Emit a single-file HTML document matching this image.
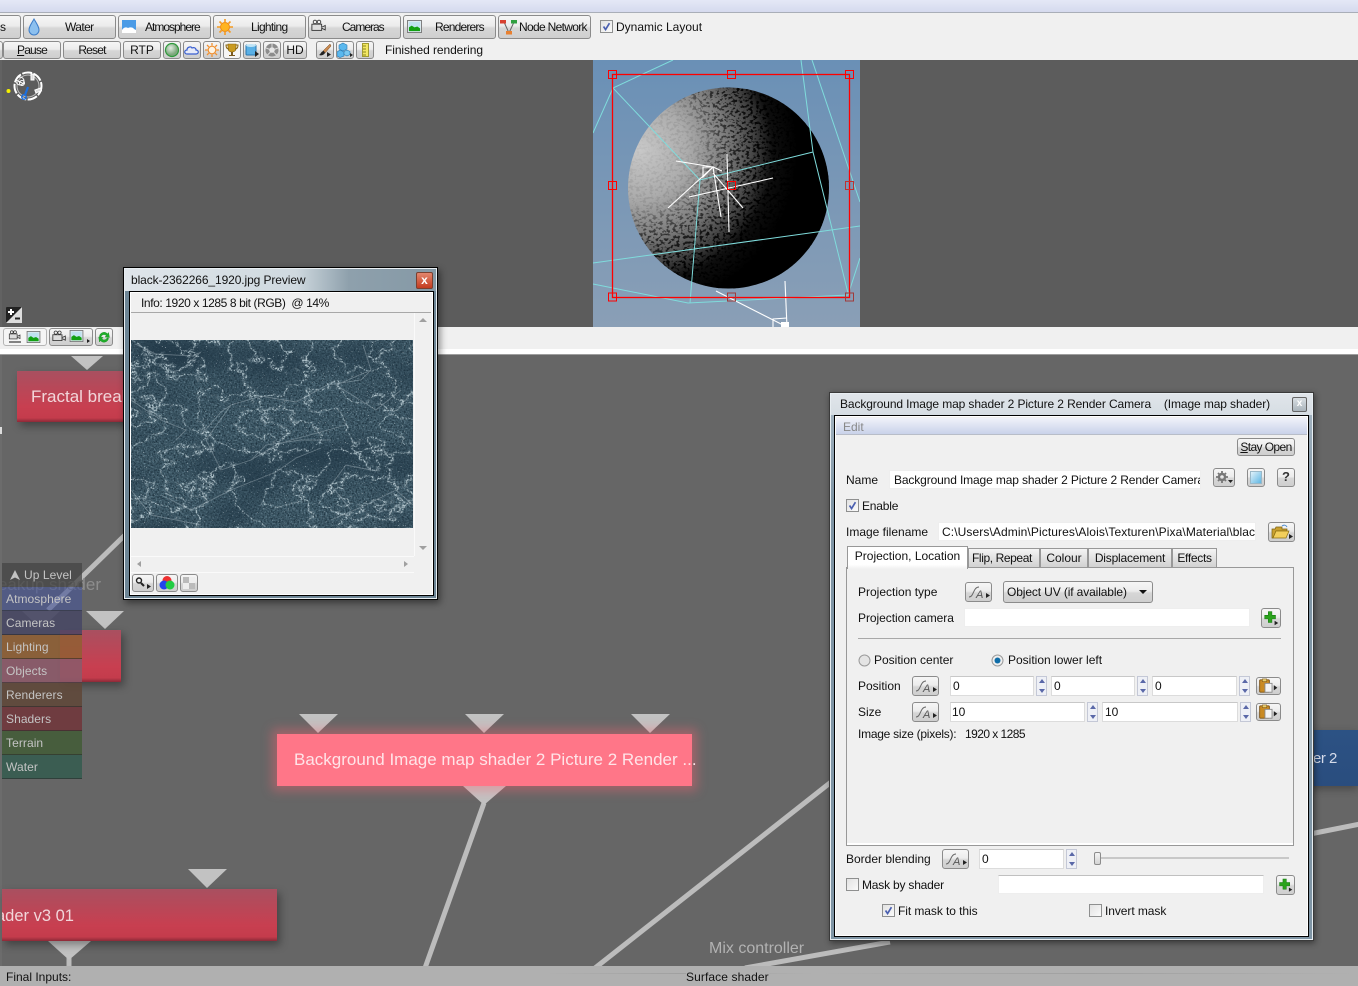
<!DOCTYPE html>
<html><head><meta charset="utf-8"><style>
html,body{margin:0;padding:0;width:1358px;height:986px;overflow:hidden;background:#666}
body{position:relative;font:12px "Liberation Sans",sans-serif;color:#111}
.a{position:absolute}
.t{position:absolute;white-space:nowrap;line-height:14px;font-size:12px;color:#111}
.b{position:absolute;box-sizing:border-box;border:1px solid #8b8b8b;border-radius:3px;background:linear-gradient(#f6f6f6,#ececec 45%,#d6d6d6 55%,#cfcfcf);text-align:center;white-space:nowrap;font-size:12px;color:#111}
.b svg{position:absolute;left:0;top:0}
.l{letter-spacing:-.6px}
.i{position:absolute;box-sizing:border-box;background:#fff;border:1px solid #dcdcdc;border-top-color:#c8c8c8;white-space:nowrap;overflow:hidden;line-height:19px;padding-left:3px;font-size:12px;color:#111}
.c{position:absolute;box-sizing:border-box;width:13px;height:13px;border:1px solid #8e8f8f;background:linear-gradient(135deg,#e2e2e2,#fafafa)}
.c svg{position:absolute;left:0;top:0}
.s{position:absolute;box-sizing:border-box;width:11px;background:#eef0f6;border:1px solid #c4c8d6}
.s:before{content:"";position:absolute;left:2px;top:2px;border:3px solid transparent;border-top:0;border-bottom:4px solid #5a68a8}
.s:after{content:"";position:absolute;left:2px;bottom:2px;border:3px solid transparent;border-bottom:0;border-top:4px solid #5a68a8}
.m{position:absolute;left:2px;width:80px;height:23px;box-sizing:border-box;border-bottom:1px solid rgba(40,40,40,.55);color:#c4c4c4;font-size:12px;line-height:25px;padding-left:4px;letter-spacing:.07px}
.n{position:absolute;box-sizing:border-box;background:linear-gradient(#a95060,#c83f50 70%,#c43c4c 92%,#8c2a38);box-shadow:3px 4px 8px rgba(0,0,0,.35);color:#f2d6da;font-size:17px;line-height:51px;white-space:nowrap;overflow:hidden}
.tab{border-radius:0;line-height:19px;border-color:#989898;background:linear-gradient(#f4f4f4,#e2e2e2 50%,#d2d2d2)}
</style></head><body>
<svg width="0" height="0" style="position:absolute">
<defs>
<filter id="bump" x="0" y="0" width="100%" height="100%" color-interpolation-filters="sRGB">
<feTurbulence type="fractalNoise" baseFrequency="0.3 0.36" numOctaves="2" seed="11"/>
<feColorMatrix type="matrix" values="0 0 0 0 0  0 0 0 0 0  0 0 0 0 0  7 0 0 0 -3.5"/>
<feComposite in2="SourceAlpha" operator="in"/>
</filter>
<filter id="marble" x="0" y="0" width="100%" height="100%" color-interpolation-filters="sRGB">
<feTurbulence type="fractalNoise" baseFrequency="0.6" numOctaves="2" seed="3" result="grain"/>
<feColorMatrix in="grain" type="matrix" values="0 0 0 0 .11  0 0 0 0 .19  0 0 0 0 .24  2.6 0 0 0 -1.05" result="dark"/>
<feColorMatrix in="grain" type="matrix" values="0 0 0 0 .5  0 0 0 0 .62  0 0 0 0 .68  0 2 0 0 -1.05" result="light"/>
<feTurbulence type="fractalNoise" baseFrequency="0.012 0.02" numOctaves="2" seed="5"/>
<feColorMatrix type="matrix" values="0 0 0 0 .13  0 0 0 0 .22  0 0 0 0 .28  2 0 0 0 -.85" result="patch"/>
<feTurbulence type="fractalNoise" baseFrequency="0.028 0.036" numOctaves="4" seed="21"/>
<feColorMatrix type="matrix" values="0 0 0 0 .88  0 0 0 0 .94  0 0 0 0 .96  1 0 0 0 0"/>
<feComponentTransfer result="veins"><feFuncA type="table" tableValues="0 0 0 0 0 0 0 0 0 0 0 0 0 0 0 0 0 0 0 .2 .85 .2 0 0 0 0 0 0 0 0 0 0 0 0 0 0 0 0 0 0 0"/></feComponentTransfer>
<feColorMatrix in="grain" type="matrix" values="0 0 0 0 1  0 0 0 0 1  0 0 0 0 1  0 0 4 0 -1.5" result="mask"/>
<feComposite in="veins" in2="mask" operator="in" result="v2"/>
<feTurbulence type="fractalNoise" baseFrequency="0.9" numOctaves="1" seed="8"/>
<feColorMatrix type="matrix" values="0 0 0 0 1  0 0 0 0 1  0 0 0 0 1  9 0 0 0 -6.4" result="spk"/>
<feMerge><feMergeNode in="SourceGraphic"/><feMergeNode in="dark"/><feMergeNode in="light"/><feMergeNode in="patch"/><feMergeNode in="v2"/><feMergeNode in="spk"/></feMerge>
</filter>
<radialGradient id="sph" gradientUnits="userSpaceOnUse" cx="640" cy="150" r="158">
<stop offset="0" stop-color="#c8c8c8"/><stop offset=".3" stop-color="#acacac"/><stop offset=".55" stop-color="#7c7c7c"/><stop offset=".72" stop-color="#444"/><stop offset=".84" stop-color="#0e0e0e"/><stop offset="1" stop-color="#000"/>
</radialGradient>
<radialGradient id="spm" gradientUnits="userSpaceOnUse" cx="640" cy="150" r="125">
<stop offset="0" stop-color="#000" stop-opacity=".03"/><stop offset=".45" stop-color="#000" stop-opacity=".1"/><stop offset=".7" stop-color="#000" stop-opacity=".6"/><stop offset="1" stop-color="#000" stop-opacity=".95"/>
</radialGradient>
<linearGradient id="sky" x1="0" y1="0" x2="0" y2="1"><stop offset="0" stop-color="#6a90b6"/><stop offset="1" stop-color="#8a9fb6"/></linearGradient>
<symbol id="plus" viewBox="0 0 20 20"><path d="M7 3h4v4h4v4h-4v4H7v-4H3V7h4z" fill="#2aa21c" stroke="#157a10" stroke-width=".6"/><path d="M14 13l4 2.500-4 2.500z" fill="#222"/></symbol>
<symbol id="paste" viewBox="0 0 26 18"><rect x="3" y="2" width="11" height="14" rx="1" fill="#c98a22" stroke="#7a4f10"/><rect x="6" y="1" width="5" height="3" fill="#e8d070" stroke="#7a4f10" stroke-width=".6"/><rect x="9" y="6" width="8" height="10" fill="#f4f4f4" stroke="#888"/><path d="M19 8l4 3-4 3z" fill="#222"/></symbol>
<symbol id="chk" viewBox="0 0 13 13"><path d="M3 6.500l2.400 3.600L10 2.600" fill="none" stroke="#4a5fb0" stroke-width="2"/></symbol>
<symbol id="land" viewBox="0 0 16 14"><rect x=".5" y=".5" width="15" height="13" fill="#dfeaf0" stroke="#777"/><rect x="2" y="2" width="12" height="10" fill="#bfe2ef"/><path d="M2 12V8l3-2 3 2 3-1 3 2v3z" fill="#12a012"/></symbol>
<symbol id="cam" viewBox="0 0 18 14"><circle cx="4.500" cy="3" r="2" fill="none" stroke="#333"/><circle cx="9" cy="3" r="2" fill="none" stroke="#333"/><rect x="1" y="5.500" width="11" height="7" fill="#ddd" stroke="#333"/><path d="M12 9l4-2v5l-4-2" fill="#ddd" stroke="#333"/></symbol>
</defs>
</svg>

<!-- top chrome -->
<div class="a" style="left:0;top:0;width:1358px;height:60px;background:#f0f0f0"></div>
<div class="a" style="left:0;top:0;width:1358px;height:13px;box-sizing:border-box;background:linear-gradient(#e4e8f6,#d5daee);border-bottom:1px solid #a9aeb8"></div>

<!-- row 1 -->
<div class="b" style="left:-20px;top:15px;width:41px;height:24px;line-height:22px;text-align:right;padding-right:14px">s</div>
<div class="b" style="left:23px;top:15px;width:93px;height:24px;line-height:22px"><svg width="20" height="22"><path d="M10 3C7 8 5 11 5 14a5 5 0 0 0 10 0c0-3-2-6-5-11z" fill="#8cc0ef" stroke="#3c7cc8"/></svg><span class="l" style="position:absolute;left:41px;top:0">Water</span></div>
<div class="b" style="left:118px;top:15px;width:93px;height:24px;line-height:22px"><svg width="20" height="22"><rect x="3" y="4" width="14" height="13" fill="#4a9be6"/><path d="M3 17v-3c2-3 4-3 6-2 2-1 5-1 6 1l2 1v3z" fill="#fff"/></svg><span style="position:absolute;left:26px;top:0;letter-spacing:-1px">Atmosphere</span></div>
<div class="b" style="left:213px;top:15px;width:93px;height:24px;line-height:22px"><svg width="24" height="22"><circle cx="11" cy="11" r="4.500" fill="#ffb420" stroke="#f08a10"/><path d="M11 3v3M11 16v3M3 11h3M16 11h3M5.500 5.500l2 2M14.500 14.500l2 2M5.500 16.500l2-2M14.500 7.500l2-2" stroke="#f59a20" stroke-width="1.600"/></svg><span style="position:absolute;left:37px;top:0;letter-spacing:-.7px">Lighting</span></div>
<div class="b" style="left:308px;top:15px;width:93px;height:24px;line-height:22px"><svg width="20" height="22" style="left:2px;top:3px"><use href="#cam" width="16" height="13"/></svg><span style="position:absolute;left:33px;top:0;letter-spacing:-1px">Cameras</span></div>
<div class="b" style="left:403px;top:15px;width:93px;height:24px;line-height:22px"><svg width="20" height="22" style="left:3px;top:4px"><use href="#land" width="15" height="13"/></svg><span style="position:absolute;left:31px;top:0;letter-spacing:-.8px">Renderers</span></div>
<div class="b" style="left:498px;top:15px;width:93px;height:24px;line-height:22px"><svg width="20" height="22"><path d="M5 6l5 11 5-11" fill="none" stroke="#666"/><rect x="1" y="4" width="6" height="3.500" fill="#d84030"/><rect x="12" y="4" width="6" height="3.500" fill="#30a040"/><rect x="7" y="15" width="6" height="3.500" fill="#e88030"/></svg><span style="position:absolute;left:20px;top:0;letter-spacing:-.68px">Node Network</span></div>
<div class="c" style="left:600px;top:20px"><svg width="11" height="11" viewBox="0 0 13 13"><use href="#chk" width="13" height="13"/></svg></div>
<div class="t" style="left:616px;top:20px">Dynamic Layout</div>

<!-- row 2 -->
<div class="b" style="left:-10px;top:41px;width:13px;height:18px"></div>
<div class="b" style="left:3px;top:41px;width:58px;height:18px;line-height:16px;letter-spacing:-.8px"><u>P</u>ause</div>
<div class="b" style="left:63px;top:41px;width:58px;height:18px;line-height:16px;letter-spacing:-.8px">Reset</div>
<div class="b" style="left:123px;top:41px;width:38px;height:18px;line-height:16px">RTP</div>
<div class="b" style="left:163px;top:41px;width:18px;height:18px"><svg width="16" height="16"><defs><radialGradient id="gb" cx=".4" cy=".35"><stop offset="0" stop-color="#e2ece2"/><stop offset="1" stop-color="#7da87d"/></radialGradient></defs><circle cx="8" cy="8" r="6.500" fill="url(#gb)" stroke="#2f9a3c" stroke-width="1.200"/></svg></div>
<div class="b" style="left:183px;top:41px;width:18px;height:18px"><svg width="16" height="16"><path d="M3 12c-3 0-3-4 0-4 0-3 4-4 5-2 2-1 4 0 4 2 3 0 3 4 0 4z" fill="#e6eaf8" stroke="#3a5fd0" stroke-width="1.200"/></svg></div>
<div class="b" style="left:203px;top:41px;width:18px;height:18px"><svg width="16" height="16"><circle cx="8" cy="8" r="3.800" fill="#fdf3e3" stroke="#f09030" stroke-width="1.200"/><path d="M8 1v2.500M8 12.500V15M1 8h2.500M12.500 8H15M3 3l1.800 1.800M11.200 11.200L13 13M3 13l1.800-1.800M11.200 4.800L13 3" stroke="#f09030" stroke-width="1.300"/></svg></div>
<div class="b" style="left:223px;top:41px;width:18px;height:18px;background:#f6f6f6"><svg width="16" height="16"><path d="M4 2h8v4c0 3-2 4-4 4S4 9 4 6z" fill="#c99a20" stroke="#8a6510" stroke-width=".6"/><path d="M4 3H2c0 3 1 4 3 4M12 3h2c0 3-1 4-3 4" fill="none" stroke="#8a6510"/><path d="M7 10h2v3h2v1H5v-1h2z" fill="#7a5a20"/></svg></div>
<div class="b" style="left:243px;top:41px;width:18px;height:18px"><svg width="16" height="16"><rect x="2" y="3" width="10" height="10" rx="1" fill="#5ab0e6" stroke="#2a78b0"/><ellipse cx="7" cy="3.500" rx="5" ry="1.500" fill="#bfe4f6"/><path d="M11 9l4 3-4 3z" fill="#222"/></svg></div>
<div class="b" style="left:263px;top:41px;width:18px;height:18px"><svg width="16" height="16"><circle cx="8" cy="8" r="6.500" fill="#8c8c8c"/><circle cx="8" cy="8" r="2.800" fill="#e6e6e6"/><path d="M8 1.500v4M2 6l4 1.500M3.500 13l3-3M12.500 13l-3-3M14 6l-4 1.500" stroke="#ddd"/></svg></div>
<div class="b" style="left:283px;top:41px;width:24px;height:18px;line-height:16px">HD</div>
<div class="b" style="left:316px;top:41px;width:18px;height:18px"><svg width="16" height="16"><path d="M13 2L6 9l2 2 6-7z" fill="#c98a50" stroke="#7a4a20" stroke-width=".5"/><path d="M7 9c-3 0-3 3-5 4 2 1 5 0 6-2z" fill="#222"/><path d="M10 10l4 2.500L10 15z" fill="#222"/></svg></div>
<div class="b" style="left:336px;top:41px;width:18px;height:18px"><svg width="16" height="16"><path d="M6 1l4 2v4L6 9 2 7V3z" fill="#5ab8ee" stroke="#2a78b0" stroke-width=".6"/><path d="M3 8l4 2v4l-4 1.500L0 14v-4z" fill="#5ab8ee" stroke="#2a78b0" stroke-width=".6"/><path d="M10 8l3 1.500v3L10 14l-3-1.500v-3z" fill="#7ac8f0" stroke="#2a78b0" stroke-width=".6"/><path d="M13 11l3 2-3 2z" fill="#222"/></svg></div>
<div class="b" style="left:356px;top:41px;width:18px;height:18px"><svg width="16" height="16"><rect x="5.500" y="1.500" width="6" height="13" fill="#f3e862" stroke="#a09a30"/><path d="M6 4h3M6 7h3M6 10h3M6 13h3" stroke="#8a8420"/></svg></div>
<div class="t" style="left:385px;top:43px;letter-spacing:-.08px">Finished rendering</div>

<!-- 3D viewport -->
<div class="a" style="left:0;top:60px;width:1358px;height:267px;background:#5c5c5c"></div>
<div class="a" style="left:0;top:60px;width:2px;height:267px;background:#626262"></div>
<svg class="a" style="left:593px;top:60px" width="267" height="267" viewBox="593 60 267 267">
<rect x="593" y="60" width="267" height="267" fill="url(#sky)"/>
<circle cx="728.500" cy="188" r="100.500" fill="url(#sph)"/>
<circle cx="728.500" cy="188" r="100.500" fill="url(#spm)" filter="url(#bump)"/>
<g fill="none" stroke="#7fdcdc" stroke-width="1">
<path d="M673 60L613 88L593 133"/>
<path d="M613 88L700 180L813 152"/>
<path d="M700 180L690 303"/>
<path d="M801 60L813 152L848 293"/>
<path d="M812 60L860 202"/>
<path d="M593 263L860 226"/>
<path d="M593 284L688 303L848 295L860 258"/>
</g>
<g fill="none" stroke="#fff" stroke-width="1.100">
<path d="M676 161L713 167L722 171"/>
<path d="M668 208L713 167"/>
<path d="M713 167L721 217"/>
<path d="M703 167V177L713 167Z"/>
<path d="M713 173L743 208"/>
<path d="M727 154L729 232"/>
<path d="M689 197L773 178"/>
<path d="M716 291L787 327"/>
<path d="M785 281L787 327"/>
<path d="M773 327V319L787 318"/>
</g>
<rect x="781" y="322" width="8" height="5" fill="#fff"/>
<g fill="none" stroke="#f00">
<rect x="612.500" y="74.500" width="237" height="223" stroke-width="1.300"/>
<rect x="608.500" y="70.500" width="8" height="8"/><rect x="727.500" y="70.500" width="8" height="8"/><rect x="845.500" y="70.500" width="8" height="8"/>
<rect x="608.500" y="181.500" width="8" height="8"/><rect x="727.500" y="181.500" width="8" height="8"/><rect x="845.500" y="181.500" width="8" height="8" stroke="#c03030"/>
<rect x="608.500" y="293" width="8" height="8"/><rect x="727.500" y="293" width="8" height="8" stroke="#a03a3a"/><rect x="845.500" y="293" width="8" height="8" stroke="#a03a3a"/>
</g>
</svg>
<!-- compass -->
<svg class="a" style="left:4px;top:68px" width="42" height="38">
<circle cx="24" cy="18" r="13.500" fill="none" stroke="#fff" stroke-width="2" stroke-dasharray="10 1.500"/>
<circle cx="24" cy="18" r="11" fill="none" stroke="#bbb" stroke-width="1"/>
<rect x="27" y="6" width="3" height="6" fill="#ddd" stroke="#fff"/>
<rect x="31" y="21" width="6" height="3" fill="#ddd" stroke="#fff" transform="rotate(-20 34 22)"/>
<path d="M24 19l-3 8" stroke="#1b6fe0" stroke-width="2.200"/><circle cx="20" cy="29" r="2.200" fill="none" stroke="#1b6fe0" stroke-width="1.500"/>
<circle cx="16" cy="13" r="4" fill="none" stroke="#fff"/><path d="M12 12l8 4" stroke="#fff"/><circle cx="18" cy="15" r="2.500" fill="none" stroke="#fff"/>
<circle cx="4.500" cy="23" r="2" fill="#f4f000"/>
</svg>
<!-- +/- -->
<svg class="a" style="left:6px;top:307px" width="16" height="16"><rect width="16" height="16" rx="1" fill="#222"/><path d="M0 16L16 0V16Z" fill="#ddd"/><path d="M2 5h6M5 2v6" stroke="#fff" stroke-width="2"/><path d="M9 11.500h5" stroke="#222" stroke-width="2"/></svg>

<!-- strip toolbar -->
<div class="a" style="left:0;top:327px;width:1358px;height:22px;background:#f0f0f0"></div>
<div class="a" style="left:0;top:349px;width:1358px;height:6px;background:#fff;border-bottom:1px solid #9e9e9e;box-sizing:border-box"></div>
<div class="b" style="left:3px;top:328px;width:44px;height:18px;background:#f5f5f5;border-color:#b5b5b5"><svg width="42" height="16"><use href="#cam" x="4" y="1" width="14" height="10"/><path d="M5 13h12" stroke="#111"/><use href="#land" x="22" y="2" width="15" height="12"/></svg></div>
<div class="b" style="left:49px;top:328px;width:44px;height:18px"><svg width="42" height="16"><use href="#cam" x="2" y="1" width="15" height="12"/><use href="#land" x="19" y="1" width="15" height="12"/><path d="M37 10l3 2-3 2z" fill="#222"/></svg></div>
<div class="b" style="left:95px;top:328px;width:18px;height:18px"><svg width="16" height="16"><path d="M3.500 8a4.500 4.500 0 0 1 8-3l1-1.500 1 5-4.500-.5 1.300-1.300A3 3 0 0 0 5 8z M12.500 9a4.500 4.500 0 0 1-8 2.500l-1 1.500-.8-5 4.500.5-1.300 1.300A3 3 0 0 0 11 9z" fill="#1fae2a" stroke="#138a1c" stroke-width=".4"/></svg></div>

<!-- node graph -->
<div class="a" style="left:0;top:355px;width:1358px;height:611px;background:#666"></div>
<div class="a" style="left:0;top:355px;width:2px;height:611px;background:#6c6c6c"></div>
<div class="a" style="left:0;top:427px;width:2px;height:7px;background:#ddd"></div>
<svg class="a" style="left:0;top:354px" width="1358" height="612" viewBox="0 354 1358 612">
<g fill="none" stroke="#bcbcbc">
<path d="M484 803L425 968" stroke-width="5"/>
<path d="M840 775L595 968" stroke-width="5"/>
<path d="M125 535L48 610" stroke-width="5"/>
<path d="M69 955V968" stroke-width="5"/>
<path d="M1360 824L1310 834" stroke-width="5"/>
<path d="M890 942L745 968" stroke-width="5"/>
</g>
<g fill="#c2c2c2">
<path d="M71 356H103L87 370Z"/>
<path d="M22 611H60L41 629Z" fill="#8a8a8a"/>
<path d="M86 611H124L105 629Z"/>
<path d="M299 714H338L318 733Z"/>
<path d="M465 714H504L484 733Z"/>
<path d="M631 714H670L650 733Z"/>
<path d="M463 786H506L484 805Z"/>
<path d="M188 869H227L207 888Z"/>
<path d="M48 941H91L69 960Z"/>
</g>
</svg>
<div class="t" style="left:2px;top:576px;font-size:17px;line-height:18px;color:#8e8e8e;width:99px;overflow:hidden;direction:rtl">Breakup shader</div>
<div class="n" style="left:17px;top:371px;width:115px;height:51px;padding-left:14px">Fractal break</div>
<div class="n" style="left:60px;top:630px;width:61px;height:52px"></div>
<div class="n" style="left:2px;top:889px;width:275px;height:52px;line-height:54px;font-size:16.500px"><span class="a" style="left:-6px;top:0">ader v3 01</span></div>
<div class="a" style="left:277px;top:734px;width:415px;height:52px;background:#ff7688;box-shadow:0 0 10px 5px rgba(255,100,115,.4);color:#ffe4e8;font-size:17px;line-height:51px;white-space:nowrap;padding-left:17px;box-sizing:border-box">Background Image map shader 2 Picture 2 Render ...</div>
<div class="a" style="left:1290px;top:730px;width:68px;height:56px;background:linear-gradient(#2c5284,#2a4d7e);color:#d6dcea;font-size:15px;line-height:58px;box-shadow:0 3px 8px rgba(0,0,0,.3)"><span class="a" style="left:23px;top:0;letter-spacing:-.5px">er 2</span></div>
<div class="t" style="left:709px;top:939px;font-size:16px;line-height:20px;color:#b2b2b2">Mix controller</div>

<!-- left menu -->
<div class="m" style="top:563px;height:24px;background:rgba(70,70,70,.75);padding-left:22px;color:#c4c4c4;border:0">Up Level</div>
<svg class="a" style="left:9px;top:569px" width="12" height="12"><path d="M6 1L11 11L6 8.500L1 11Z" fill="#c4c4c4"/></svg>
<div class="m" style="top:587px;height:24px;background:rgba(70,84,150,.62)">Atmosphere</div>
<div class="m" style="top:611px;height:24px;background:rgba(68,68,100,.78)">Cameras</div>
<div class="m" style="top:635px;height:24px;background:rgba(145,95,50,.85)">Lighting</div>
<div class="m" style="top:659px;height:24px;background:rgba(140,90,105,.9)">Objects</div>
<div class="m" style="top:683px;height:24px;background:rgba(95,72,58,.9)">Renderers</div>
<div class="m" style="top:707px;height:24px;background:rgba(112,55,60,.9)">Shaders</div>
<div class="m" style="top:731px;height:24px;background:rgba(68,92,56,.9)">Terrain</div>
<div class="m" style="top:755px;height:24px;background:rgba(54,92,80,.9)">Water</div>

<!-- bottom bar -->
<div class="a" style="left:0;top:966px;width:1358px;height:20px;background:#b0b0b0"></div>
<div class="a" style="left:2px;top:973px;width:1356px;height:1px;background:linear-gradient(90deg,#b0b0b0 40%,#a0a0a0 50%,#b0b0b0 60%,#a0a0a0 80%,#b0b0b0)"></div>
<div class="t" style="left:6px;top:970px">Final Inputs:</div>
<div class="t" style="left:686px;top:970px;letter-spacing:.1px;background:#b0b0b0">Surface shader</div>

<!-- preview window -->
<div class="a" style="left:123px;top:267px;width:315px;height:333px;box-sizing:border-box;border:1px solid #000;background:#6d8595;box-shadow:inset 0 0 0 1px #e8eef2,2px 3px 7px rgba(0,0,0,.45)"></div>
<div class="a" style="left:125px;top:269px;width:311px;height:22px;background:linear-gradient(90deg,#dfe5ea 0,#cfd9df 55%,#8ea0ac 72%,#8599a6 100%)"></div>
<div class="t" style="left:131px;top:273px;letter-spacing:-.1px">black-2362266_1920.jpg Preview</div>
<div class="a" style="left:416px;top:272px;width:17px;height:17px;box-sizing:border-box;border:1px solid #7a4030;border-radius:2px;background:linear-gradient(#e2866e,#c43c20);color:#fff;text-align:center;font:bold 12px/14px 'Liberation Sans',sans-serif">x</div>
<div class="a" style="left:129px;top:291px;width:305px;height:305px;box-sizing:border-box;border:1px solid #000;background:#fff"></div>
<div class="a" style="left:131px;top:293px;width:301px;height:301px;background:#f0f0f0"></div>
<div class="t" style="left:141px;top:296px;letter-spacing:-.4px">Info: 1920 x 1285 8 bit (RGB)&nbsp; @ 14%</div>
<div class="a" style="left:131px;top:312px;width:300px;height:1px;background:#a8a8a8"></div>
<div class="a" style="left:414px;top:313px;width:1px;height:243px;background:#fafafa"></div>
<svg class="a" style="left:131px;top:340px" width="282" height="188"><rect width="282" height="188" fill="#3f5a68" filter="url(#marble)"/>
<g fill="none" stroke="#dfe9ee" stroke-width=".9" opacity=".3">
<path d="M4 4L25 14L62 16L70 12L50 30L40 32"/>
<path d="M100 65L130 56L165 62L196 45L230 40L240 30L232 5"/>
<path d="M70 95L90 72L100 65L75 100L90 130L120 120L135 105L170 100L200 100"/>
<path d="M120 120L145 105L160 100L215 85"/>
<path d="M0 60L30 80L55 90L45 100M30 155L60 170L100 150L145 132L165 118L190 108"/>
<path d="M240 30L205 45L245 70L270 50M0 150L20 175L70 185M200 180L235 165L265 150L282 165"/>
<path d="M240 130L215 125L200 145L220 170"/>
</g></svg>
<svg class="a" style="left:414px;top:313px" width="18" height="243"><path d="M5 9L9 5L13 9Z" fill="#a0a0a0"/><path d="M5 233L9 237L13 233Z" fill="#a0a0a0"/></svg>
<div class="a" style="left:131px;top:556px;width:283px;height:17px;border-top:1px solid #fafafa;border-bottom:1px solid #fafafa;box-sizing:border-box"></div>
<svg class="a" style="left:131px;top:556px" width="283" height="17"><path d="M10 5V11L6 8Z" fill="#a0a0a0"/><path d="M273 5V11L277 8Z" fill="#a0a0a0"/></svg>
<div class="b" style="left:132px;top:574px;width:22px;height:18px"><svg width="20" height="16"><circle cx="6" cy="5.500" r="2.500" fill="none" stroke="#222" stroke-width="1.400"/><path d="M8 8l3 3" stroke="#222" stroke-width="2"/><path d="M14 9l4 2.500L14 14z" fill="#222"/></svg></div>
<div class="b" style="left:156px;top:574px;width:22px;height:18px"><svg width="20" height="16"><circle cx="10" cy="5.500" r="4.500" fill="#ee3030"/><circle cx="7" cy="10" r="4.500" fill="#2244ee"/><circle cx="13" cy="10" r="4.500" fill="#22cc44"/></svg></div>
<div class="b" style="left:180px;top:574px;width:18px;height:18px"><svg width="16" height="16"><rect x="2" y="2" width="6" height="6" fill="#bbb"/><rect x="8" y="2" width="6" height="6" fill="#eee"/><rect x="2" y="8" width="6" height="6" fill="#eee"/><rect x="8" y="8" width="6" height="6" fill="#bbb"/></svg></div>

<!-- shader dialog -->
<div class="a" style="left:829px;top:392px;width:485px;height:549px;box-sizing:border-box;border:1px solid #3a3a3a;background:linear-gradient(#a9b8c4,#7f95a5 20%,#7f95a5);box-shadow:inset 0 0 0 1px #e8eef2,1px 2px 6px rgba(0,0,0,.45)"></div>
<div class="a" style="left:831px;top:394px;width:481px;height:21px;background:linear-gradient(#e0e5ea,#d6dde3)"></div>
<div class="t" style="left:840px;top:397px;letter-spacing:-.11px">Background Image map shader 2 Picture 2 Render Camera&nbsp;&nbsp;&nbsp; (Image map shader)</div>
<div class="a" style="left:1292px;top:397px;width:15px;height:15px;box-sizing:border-box;border:1px solid #666;border-radius:2px;background:linear-gradient(#d8dee2,#aab4bb);color:#fff;text-align:center;font:bold 10px/12px 'Liberation Sans',sans-serif">x</div>
<div class="a" style="left:834px;top:415px;width:475px;height:522px;box-sizing:border-box;border:1px solid #000;background:#fff"></div>
<div class="a" style="left:835px;top:416px;width:473px;height:520px;background:#f0f0f0;border:1px solid #fff;box-sizing:border-box"></div>
<div class="a" style="left:836px;top:418px;width:471px;height:17px;background:linear-gradient(#f0f2fa,#c9d2ea);border-bottom:1px solid #b8bdc8;box-sizing:border-box"></div>
<div class="t" style="left:843px;top:420px;color:#888">Edit</div>
<div class="b" style="left:1237px;top:438px;width:58px;height:18px;line-height:16px;letter-spacing:-.6px"><u>S</u>tay Open</div>

<div class="t" style="left:846px;top:473px">Name</div>
<div class="i" style="left:889px;top:470px;width:312px;height:19px;padding-left:4px;border-color:#eee;letter-spacing:-.13px">Background Image map shader 2 Picture 2 Render Camera</div>
<div class="b" style="left:1213px;top:468px;width:22px;height:19px"><svg width="20" height="17"><circle cx="8" cy="8" r="3" fill="none" stroke="#777" stroke-width="2.400"/><path d="M8 2v2.500M8 11.500V14M2 8h2.500M11.500 8H14M4 4l1.700 1.700M10.300 10.300L12 12M4 12l1.700-1.700M10.300 5.700L12 4" stroke="#777" stroke-width="1.800"/><path d="M14 11h5l-2.500 3z" fill="#222"/></svg></div>
<div class="b" style="left:1247px;top:468px;width:18px;height:19px"><svg width="16" height="17"><defs><linearGradient id="sq" x1="0" y1="0" x2="1" y2="1"><stop offset="0" stop-color="#e6f4fb"/><stop offset="1" stop-color="#5ab4e2"/></linearGradient></defs><rect x="2.500" y="2.500" width="11" height="12" fill="url(#sq)" stroke="#9ab8c8"/></svg></div>
<div class="b" style="left:1277px;top:468px;width:18px;height:19px;font:bold 13px/16px 'Liberation Sans',sans-serif;color:#333">?</div>

<div class="c" style="left:846px;top:499px"><svg width="11" height="11" viewBox="0 0 13 13"><use href="#chk" width="13" height="13"/></svg></div>
<div class="t" style="left:862px;top:499px;letter-spacing:-.2px">Enable</div>
<div class="t" style="left:846px;top:525px">Image filename</div>
<div class="i" style="left:938px;top:522px;width:318px;height:19px;border-color:#eee;letter-spacing:.1px">C:\Users\Admin\Pictures\Alois\Texturen\Pixa\Material\black</div>
<div class="b" style="left:1268px;top:522px;width:27px;height:20px"><svg width="25" height="18"><path d="M3 15V6h3l1-2h6v2h5v2H7l-3 7z" fill="#c9a030" stroke="#7a6010" stroke-width=".7"/><path d="M4 15l3-7h13l-3 7z" fill="#f2cf5c" stroke="#8a6e10" stroke-width=".7"/><path d="M13 3c2-1.500 4-1 5 1" fill="none" stroke="#4a8ad0"/><path d="M20 11l4 2.500-4 2.500z" fill="#222"/></svg></div>

<!-- tabs -->
<div class="a" style="left:846px;top:567px;width:448px;height:279px;box-sizing:border-box;border:1px solid #989898;background:#f0f0f0;box-shadow:inset 0 -2px 0 #fff"></div>
<div class="a" style="left:847px;top:546px;width:121px;height:23px;box-sizing:border-box;border:1px solid #989898;border-bottom:0;line-height:19px;text-align:center;z-index:2;background:linear-gradient(#fff 80%,#f0f0f0);white-space:nowrap">Projection, Location</div>
<div class="b tab" style="left:968px;top:548px;width:72px;height:20px;letter-spacing:-.4px;text-align:left;padding-left:3px">Flip, Repeat</div>
<div class="b tab" style="left:1040px;top:548px;width:48px;height:20px">Colour</div>
<div class="b tab" style="left:1088px;top:548px;width:84px;height:20px;letter-spacing:-.2px">Displacement</div>
<div class="b tab" style="left:1172px;top:548px;width:45px;height:20px;letter-spacing:-.3px">Effects</div>

<div class="t" style="left:858px;top:585px">Projection type</div>
<div class="b" style="left:965px;top:582px;width:27px;height:20px"><svg width="25" height="18"><path d="M3 14C8 14 7 4 13 4" fill="none" stroke="#666"/><text x="10" y="15" font-family="Liberation Sans" font-size="11" font-style="italic" fill="#555">A</text><path d="M20 10l4 2.500-4 2.500z" fill="#222"/></svg></div>
<div class="b" style="left:1003px;top:581px;width:150px;height:22px;line-height:20px;text-align:left;padding-left:3px;letter-spacing:-.12px">Object UV (if available)<span class="a" style="right:5px;top:8px;border:4px solid transparent;border-top:4px solid #111;border-bottom:0"></span></div>
<div class="t" style="left:858px;top:611px;letter-spacing:-.05px">Projection camera</div>
<div class="i" style="left:964px;top:608px;width:286px;height:19px;border-color:#eee"></div>
<div class="b" style="left:1261px;top:608px;width:20px;height:20px"><svg width="18" height="18"><use href="#plus" width="18" height="18"/></svg></div>
<div class="a" style="left:858px;top:638px;width:423px;height:1px;background:#a8a8a8"></div>

<svg class="a" style="left:858px;top:654px" width="13" height="13"><circle cx="6.500" cy="6.500" r="5.500" fill="#e4e4e4" stroke="#9a9a9a"/></svg>
<div class="t" style="left:874px;top:653px">Position center</div>
<svg class="a" style="left:991px;top:654px" width="13" height="13"><circle cx="6.500" cy="6.500" r="5.500" fill="#eee" stroke="#9a9a9a"/><circle cx="6.500" cy="6.500" r="3" fill="#0f6da8"/></svg>
<div class="t" style="left:1008px;top:653px">Position lower left</div>

<div class="t" style="left:858px;top:679px">Position</div>
<div class="b" style="left:912px;top:676px;width:27px;height:20px"><svg width="25" height="18"><path d="M3 14C8 14 7 4 13 4" fill="none" stroke="#666"/><text x="10" y="15" font-family="Liberation Sans" font-size="11" font-style="italic" fill="#555">A</text><path d="M20 10l4 2.500-4 2.500z" fill="#222"/></svg></div>
<div class="i" style="left:950px;top:676px;width:84px;height:20px;padding-left:2px;line-height:19px">0</div>
<div class="s" style="left:1036px;top:676px;height:20px"></div>
<div class="i" style="left:1051px;top:676px;width:84px;height:20px;padding-left:2px;line-height:19px">0</div>
<div class="s" style="left:1137px;top:676px;height:20px"></div>
<div class="i" style="left:1152px;top:676px;width:85px;height:20px;padding-left:2px;line-height:19px">0</div>
<div class="s" style="left:1239px;top:676px;height:20px"></div>
<div class="b" style="left:1256px;top:677px;width:25px;height:18px"><svg width="23" height="16"><use href="#paste" width="23" height="16"/></svg></div>

<div class="t" style="left:858px;top:705px">Size</div>
<div class="b" style="left:912px;top:702px;width:27px;height:20px"><svg width="25" height="18"><path d="M3 14C8 14 7 4 13 4" fill="none" stroke="#666"/><text x="10" y="15" font-family="Liberation Sans" font-size="11" font-style="italic" fill="#555">A</text><path d="M20 10l4 2.500-4 2.500z" fill="#222"/></svg></div>
<div class="i" style="left:950px;top:702px;width:135px;height:20px;padding-left:1px;line-height:19px">10</div>
<div class="s" style="left:1087px;top:702px;height:20px"></div>
<div class="i" style="left:1102px;top:702px;width:136px;height:20px;padding-left:2px;line-height:19px">10</div>
<div class="s" style="left:1240px;top:702px;height:20px"></div>
<div class="b" style="left:1256px;top:703px;width:25px;height:18px"><svg width="23" height="16"><use href="#paste" width="23" height="16"/></svg></div>

<div class="t" style="left:858px;top:727px;letter-spacing:-.25px">Image size (pixels):</div>
<div class="t" style="left:965px;top:727px;letter-spacing:-.55px">1920 x 1285</div>

<div class="t" style="left:846px;top:852px">Border blending</div>
<div class="b" style="left:942px;top:849px;width:27px;height:20px"><svg width="25" height="18"><path d="M3 14C8 14 7 4 13 4" fill="none" stroke="#666"/><text x="10" y="15" font-family="Liberation Sans" font-size="11" font-style="italic" fill="#555">A</text><path d="M20 10l4 2.500-4 2.500z" fill="#222"/></svg></div>
<div class="i" style="left:979px;top:849px;width:85px;height:20px;padding-left:2px;line-height:19px">0</div>
<div class="s" style="left:1066px;top:849px;height:20px"></div>
<div class="a" style="left:1096px;top:857px;width:193px;height:2px;background:#c8c8c8"></div>
<div class="a" style="left:1094px;top:852px;width:7px;height:13px;box-sizing:border-box;border:1px solid #8c8c8c;border-radius:2px;background:linear-gradient(#f4f4f4,#d4d4d4)"></div>

<div class="c" style="left:846px;top:878px"></div>
<div class="t" style="left:862px;top:878px;letter-spacing:-.2px">Mask by shader</div>
<div class="i" style="left:998px;top:875px;width:266px;height:19px;border-color:#eee;border-top-color:#c0c0c0"></div>
<div class="b" style="left:1276px;top:875px;width:19px;height:20px"><svg width="17" height="18"><use href="#plus" width="17" height="18"/></svg></div>
<div class="c" style="left:882px;top:904px"><svg width="11" height="11" viewBox="0 0 13 13"><use href="#chk" width="13" height="13"/></svg></div>
<div class="t" style="left:898px;top:904px;letter-spacing:-.07px">Fit mask to this</div>
<div class="c" style="left:1089px;top:904px"></div>
<div class="t" style="left:1105px;top:904px;letter-spacing:-.07px">Invert mask</div>
</body></html>
